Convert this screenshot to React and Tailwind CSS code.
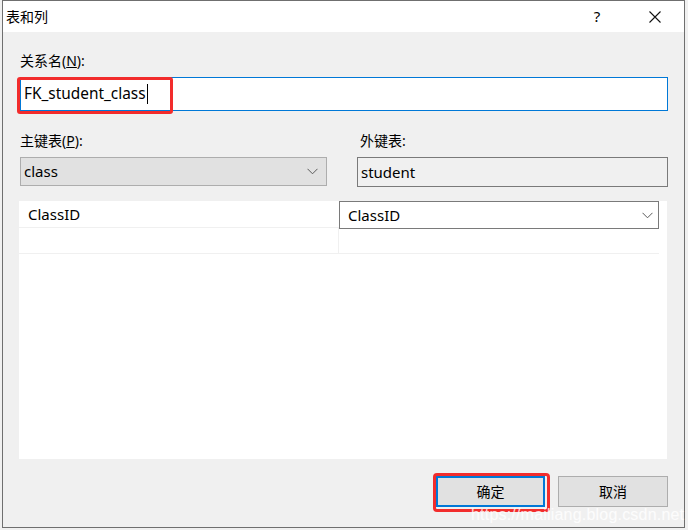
import React from "react";

const font = { fontFamily: '"Segoe UI", "Noto Sans", "Noto Sans CJK SC", sans-serif' };

function Chevron() {
  return (
    <svg width="11" height="7" viewBox="0 0 11 7" className="shrink-0">
      <path d="M0.5 0.8 L5.5 5.8 L10.5 0.8" fill="none" stroke="#5a5a5a" strokeWidth="1" />
    </svg>
  );
}

export default function App() {
  return (
    <div className="relative w-[688px] h-[530px] bg-[#f0f0f0] overflow-hidden" style={font}>
      <div className="ml-[2px] w-[683px] h-[528px] border border-[#6f6f6f] flex flex-col bg-[#f0f0f0]">
        {/* title bar */}
        <div className="h-[31px] bg-white flex items-center pl-[3px] text-[14px] text-black">
          <span className="flex-1">表和列</span>
          <span className="w-[20px] text-center mr-[42px] text-[15px]">?</span>
          <svg width="12" height="12" viewBox="0 0 12 12" className="mr-[23px]">
            <path d="M0.5 0.5 L11.5 11.5 M11.5 0.5 L0.5 11.5" stroke="#111" strokeWidth="1.1" />
          </svg>
        </div>

        {/* body */}
        <div className="flex-1 flex flex-col pl-[17px] pr-[16px] pt-[19px] text-[14px] text-black">
          <div className="h-[20px] leading-[20px]">
            关系名(<span className="underline">N</span>):
          </div>
          <div className="relative mt-[6px] h-[34px] bg-white border border-[#0078d7] flex items-center pl-[3px] text-[15.4px]">
            <span>FK_student_class</span>
            <span className="ml-[1px] w-[1px] h-[20px] bg-black" />
            <div className="absolute left-[-4px] top-[-1px] w-[156px] h-[37px] border-[3px] border-[#f22c2c] rounded-[3px]" />
          </div>

          <div className="mt-[20px] flex">
            <div className="w-[307px]">
              <div className="h-[20px] leading-[20px]">
                主键表(<span className="underline">P</span>):
              </div>
              <div className="mt-[6px] h-[29px] bg-[#e1e1e1] border border-[#adadad] flex items-center pl-[3px] pr-[8px] text-[15px]">
                <span className="flex-1">class</span>
                <Chevron />
              </div>
            </div>
            <div className="ml-[30px] flex-1">
              <div className="h-[20px] leading-[20px] pl-[3px]">外键表:</div>
              <div className="mt-[6px] h-[30px] bg-[#f0f0f0] border border-[#7a7a7a] flex items-center pl-[3px] text-[15px]">
                student
              </div>
            </div>
          </div>

          {/* grid */}
          <div className="mt-[14px] ml-[-1px] mr-[1px] h-[258px] bg-white text-[15px]">
            <div className="flex h-[27px] border-b border-[#f0f0f0] mr-[8px]">
              <div className="w-[320px] pl-[9px] flex items-center">ClassID</div>
              <div className="flex-1 h-[28px] border border-[#7a7a7a] bg-white flex items-center pl-[8px] pr-[5px]">
                <span className="flex-1">ClassID</span>
                <Chevron />
              </div>
            </div>
            <div className="flex h-[26px] border-b border-[#f0f0f0] mr-[8px]">
              <div className="w-[320px] border-r border-[#f0f0f0]" />
              <div className="flex-1" />
            </div>
          </div>

          {/* buttons */}
          <div className="mt-[17px] flex justify-end gap-[13px] text-[14px]">
            <div className="relative w-[109px] h-[31px] bg-[#e1e1e1] border-2 border-[#0078d7] flex items-center justify-center">
              确定
              <div className="absolute left-[-5px] top-[-5px] w-[117px] h-[39px] border-[3px] border-[#f22c2c] rounded-[4px]" />
            </div>
            <div className="w-[110px] h-[31px] bg-[#e1e1e1] border border-[#adadad] flex items-center justify-center">
              取消
            </div>
          </div>
        </div>
      </div>

      {/* watermark */}
      <div
        className="absolute left-[471px] top-[503px] text-[16px] text-white/80 tracking-[0.2px]"
        style={{ fontFamily: '"Liberation Sans", Arial, sans-serif' }}
      >
        https://mailiang.blog.csdn.net
      </div>
    </div>
  );
}
